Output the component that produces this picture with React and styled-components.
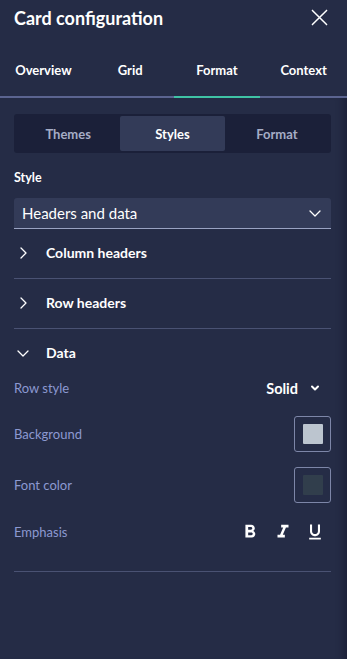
import styled, { createGlobalStyle } from "styled-components";
import { MdFormatBold, MdFormatItalic, MdFormatUnderlined } from "react-icons/md";

const GlobalStyle = createGlobalStyle`
  html, body {
    margin: 0;
    padding: 0;
    background: #252c46;
  }
  * {
    box-sizing: border-box;
  }
`;

const Panel = styled.div`
  width: 347px;
  height: 659px;
  background: #252c46;
  color: #ffffff;
  font-family: Lato, "Open Sans", sans-serif;
  display: flex;
  flex-direction: column;
  overflow: hidden;
`;

const Header = styled.header`
  display: flex;
  align-items: center;
  justify-content: space-between;
  height: 36px;
  padding: 0 19px 1px 14px;
`;

const Title = styled.h1`
  margin: 0;
  font-size: 18px;
  font-weight: 700;
  line-height: 22px;
`;

const CloseButton = styled.button`
  display: flex;
  background: none;
  border: none;
  padding: 0;
  color: #ffffff;
  cursor: pointer;
`;

const Tabs = styled.nav`
  display: grid;
  grid-template-columns: repeat(4, 1fr);
`;

const Tab = styled.div`
  text-align: center;
  font-size: 13px;
  font-weight: 700;
  line-height: 17px;
  padding: 26px 0 17px;
  border-bottom: 2px solid ${(p) => (p.$active ? "#3fc3a5" : "#5b6490")};
`;

const Content = styled.div`
  flex: 1;
  padding: 16px 16px 0 14px;
  box-shadow: inset -10px 0 10px -8px rgba(10, 14, 28, 0.45);
`;

const Segmented = styled.div`
  display: grid;
  grid-template-columns: repeat(3, 1fr);
  padding: 2px;
  background: #1b2039;
  border-radius: 3px;
  height: 39px;
`;

const Segment = styled.div`
  display: flex;
  align-items: center;
  justify-content: center;
  font-size: 13px;
  font-weight: 700;
  border-radius: 2px;
  color: ${(p) => (p.$active ? "#ffffff" : "#a6adc6")};
  background: ${(p) => (p.$active ? "#333b58" : "transparent")};
`;

const Label = styled.div`
  margin-top: 17px;
  font-size: 12.5px;
  font-weight: 700;
  line-height: 16px;
`;

const Select = styled.div`
  display: flex;
  align-items: center;
  justify-content: space-between;
  margin-top: 12px;
  height: 31px;
  padding: 0 10px 0 8px;
  background: #333b58;
  border-radius: 3px 3px 0 0;
  border-bottom: 1px solid #9aa3c2;
  font-size: 15px;
`;

const Section = styled.div`
  border-bottom: 1px solid #4a5273;
`;

const SectionHeader = styled.div`
  display: flex;
  align-items: center;
  gap: 17px;
  height: 49px;
  padding: 0 0 2px 3px;
  font-size: 14px;
  font-weight: 700;
`;

const SectionBody = styled.div`
  display: flex;
  flex-direction: column;
  gap: 15px;
  margin-top: -3px;
  padding-bottom: 25px;
`;

const SettingRow = styled.div`
  display: flex;
  align-items: center;
  justify-content: space-between;
  min-height: ${(p) => p.$h || 24}px;
`;

const SettingLabel = styled.span`
  font-size: 13px;
  color: #8c99d1;
`;

const InlineSelect = styled.div`
  display: flex;
  align-items: center;
  gap: 12px;
  padding-right: 11px;
  font-size: 14.5px;
  font-weight: 700;
`;

const Swatch = styled.div`
  display: flex;
  align-items: center;
  justify-content: center;
  width: 37px;
  height: 36px;
  border: 1px solid #7d86a8;
  border-radius: 3px;
`;

const SwatchFill = styled.div`
  width: 20px;
  height: 20px;
  border-radius: 1px;
  background: ${(p) => p.$color};
`;

const EmphasisGroup = styled.div`
  display: flex;
  align-items: center;
  gap: 11px;
  padding-right: 6px;
`;

const EmphasisButton = styled.button`
  display: flex;
  background: none;
  border: none;
  padding: 0;
  color: #ffffff;
  cursor: pointer;
`;

const Chevron = ({ dir = "down", size = 12 }) => {
  const d = dir === "right" ? "M4 1l5 5-5 5" : "M1 4l5 5 5-5";
  return (
    <svg width={size} height={size} viewBox="0 0 12 12" fill="none">
      <path d={d} stroke="#ffffff" strokeWidth="1.3" strokeLinecap="round" strokeLinejoin="round" />
    </svg>
  );
};

const SmallChevron = () => (
  <svg width="10" height="10" viewBox="0 0 10 10" fill="none">
    <path d="M2 3.5l3 3 3-3" stroke="#ffffff" strokeWidth="2" strokeLinecap="round" strokeLinejoin="round" />
  </svg>
);

const CloseIcon = () => (
  <svg width="17" height="17" viewBox="0 0 18 18" fill="none">
    <path d="M1.5 1.5l15 15M16.5 1.5l-15 15" stroke="#ffffff" strokeWidth="1.6" strokeLinecap="round" />
  </svg>
);

const tabs = ["Overview", "Grid", "Format", "Context"];
const segments = ["Themes", "Styles", "Format"];

const App = () => {
  return (
    <>
      <GlobalStyle />
      <Panel>
        <Header>
          <Title>Card configuration</Title>
          <CloseButton aria-label="Close">
            <CloseIcon />
          </CloseButton>
        </Header>
        <Tabs>
          {tabs.map((tab) => (
            <Tab key={tab} $active={tab === "Format"}>
              {tab}
            </Tab>
          ))}
        </Tabs>
        <Content>
          <Segmented>
            {segments.map((s) => (
              <Segment key={s} $active={s === "Styles"}>
                {s}
              </Segment>
            ))}
          </Segmented>
          <Label>Style</Label>
          <Select>
            <span>Headers and data</span>
            <Chevron />
          </Select>
          <Section>
            <SectionHeader>
              <Chevron dir="right" />
              Column headers
            </SectionHeader>
          </Section>
          <Section>
            <SectionHeader>
              <Chevron dir="right" />
              Row headers
            </SectionHeader>
          </Section>
          <Section>
            <SectionHeader>
              <Chevron />
              Data
            </SectionHeader>
            <SectionBody>
              <SettingRow $h={26}>
                <SettingLabel>Row style</SettingLabel>
                <InlineSelect>
                  Solid
                  <SmallChevron />
                </InlineSelect>
              </SettingRow>
              <SettingRow $h={36}>
                <SettingLabel>Background</SettingLabel>
                <Swatch>
                  <SwatchFill $color="#bcc5cf" />
                </Swatch>
              </SettingRow>
              <SettingRow $h={36}>
                <SettingLabel>Font color</SettingLabel>
                <Swatch>
                  <SwatchFill $color="#313e4c" />
                </Swatch>
              </SettingRow>
              <SettingRow $h={28}>
                <SettingLabel>Emphasis</SettingLabel>
                <EmphasisGroup>
                  <EmphasisButton aria-label="Bold">
                    <MdFormatBold size={22} />
                  </EmphasisButton>
                  <EmphasisButton aria-label="Italic">
                    <MdFormatItalic size={22} />
                  </EmphasisButton>
                  <EmphasisButton aria-label="Underline">
                    <MdFormatUnderlined size={20} />
                  </EmphasisButton>
                </EmphasisGroup>
              </SettingRow>
            </SectionBody>
          </Section>
        </Content>
      </Panel>
    </>
  );
};

export default App;
